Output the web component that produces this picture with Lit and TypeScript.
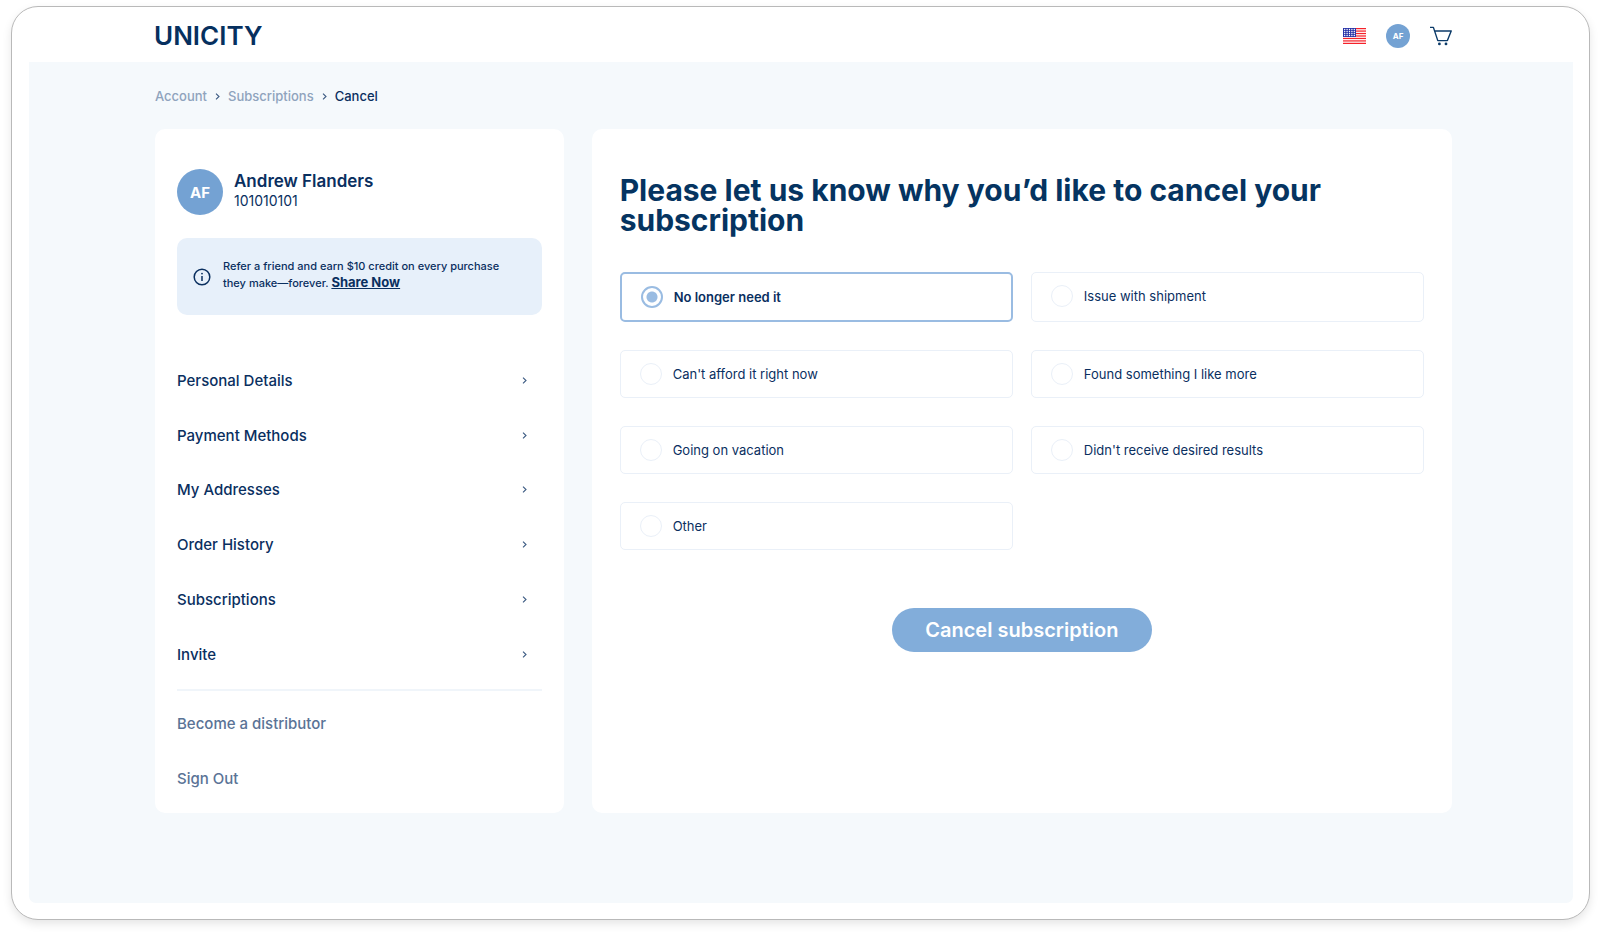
import { LitElement, html, css, svg } from "lit";
import { customElement, state } from "lit/decorators.js";
import { classMap } from "lit/directives/class-map.js";

const MENU = [
  "Personal Details",
  "Payment Methods",
  "My Addresses",
  "Order History",
  "Subscriptions",
  "Invite",
];

const REASONS = [
  "No longer need it",
  "Issue with shipment",
  "Can't afford it right now",
  "Found something I like more",
  "Going on vacation",
  "Didn't receive desired results",
  "Other",
];

const chevron = html`<svg class="chevron" viewBox="0 0 5 7" width="5" height="7" aria-hidden="true">
  <path d="M1 0.6 L4 3.5 L1 6.4" fill="none" stroke="currentColor" stroke-width="1.1" />
</svg>`;

const flag = html`<svg viewBox="0 0 23 16" width="23" height="16" role="img" aria-label="United States">
  <rect width="23" height="16" fill="#fff" />
  ${[0, 1, 2, 3, 4, 5, 6].map(
    (i) => svg`<rect y=${(i * 32) / 13} width="23" height=${16 / 13} fill="#f5222a" />`
  )}
  <rect width="13" height="9" fill="#2a35a8" />
  ${[0, 1, 2, 3].map((r) =>
    [0, 1, 2, 3, 4].map(
      (c) => svg`<circle cx=${1.7 + c * 2.4} cy=${1.5 + r * 2} r="0.7" fill="#fff" />`
    )
  )}
</svg>`;

const cart = html`<svg viewBox="0 0 22 20" width="22" height="20" aria-hidden="true">
  <path d="M0 1.4 H3.4 L7.8 14.6 H17.4 L21.2 5 H4.6" fill="none" stroke="#0b3a68" stroke-width="1.4" stroke-linejoin="round" />
  <circle cx="9.4" cy="17.9" r="1.4" fill="#0b3a68" />
  <circle cx="16" cy="17.9" r="1.4" fill="#0b3a68" />
</svg>`;

@customElement("app-root")
export class AppRoot extends LitElement {
  static styles = css`
    :host {
      box-sizing: border-box;
      min-height: 100vh;
      padding: 6px 10px 15px 11px;
      display: flex;
      background: #fff;
      color: #0a2f5f;
      font-family: Inter, "Liberation Sans", sans-serif;
      font-size: 13px;
    }
    * {
      box-sizing: border-box;
    }
    a {
      color: inherit;
      text-decoration: none;
    }
    .frame {
      flex: 1;
      display: flex;
      flex-direction: column;
      padding: 0 16px 16px 17px;
      border: 1px solid #b9b9b9;
      border-radius: 27px;
      background: #fff;
      box-shadow: 0 4px 10px rgba(0, 0, 0, 0.1);
    }
    .header {
      display: flex;
      align-items: center;
      justify-content: space-between;
      height: 55px;
      padding: 3px 121px 0 125px;
    }
    .logo {
      font-size: 26px;
      line-height: 30px;
      font-weight: 600;
      color: #06305f;
    }
    .tools {
      display: flex;
      align-items: center;
      gap: 20px;
    }
    .tools a {
      display: flex;
    }
    .avatar {
      display: flex;
      align-items: center;
      justify-content: center;
      flex: none;
      width: 46px;
      height: 46px;
      border-radius: 50%;
      background: #74a2d3;
      color: #fff;
      font-size: 15px;
      font-weight: 700;
    }
    .avatar.small {
      width: 24px;
      height: 24px;
      font-size: 8px;
    }
    .page {
      flex: 1;
      display: flex;
      flex-direction: column;
      padding: 24px 121px 90px 126px;
      border-radius: 0 0 7px 7px;
      background: #f5f9fc;
    }
    .crumbs {
      display: flex;
      align-items: center;
      gap: 8px;
      margin-bottom: 23px;
      line-height: 20px;
      font-weight: 500;
      color: #8fa3bd;
    }
    .crumbs .here {
      color: #0a2f5f;
    }
    .chevron {
      color: #3b5a82;
    }
    .columns {
      flex: 1;
      display: grid;
      grid-template-columns: 19fr 40fr;
      gap: 28px;
    }
    .card {
      display: flex;
      flex-direction: column;
      border-radius: 10px;
      background: #fff;
    }
    .side {
      padding: 40px 22px 7px;
    }
    .person {
      display: flex;
      gap: 11px;
    }
    .name {
      margin: 2px 0 0;
      font-size: 17px;
      line-height: 20px;
      font-weight: 600;
    }
    .number {
      margin: 0;
      font-size: 14px;
      line-height: 20px;
    }
    .refer {
      display: flex;
      align-items: center;
      gap: 12px;
      margin: 23px 0 38px;
      padding: 20px 26px 20px 16px;
      border-radius: 10px;
      background: #e7f0fa;
      font-size: 11px;
      line-height: 17px;
      font-weight: 500;
    }
    .refer svg {
      flex: none;
    }
    .refer p {
      margin: 0;
      padding-bottom: 3px;
    }
    .refer a {
      font-size: 13px;
      line-height: 15px;
      font-weight: 700;
      text-decoration: underline;
    }
    .menu {
      flex: 1;
      display: flex;
      flex-direction: column;
    }
    .item {
      flex: 1;
      display: flex;
      align-items: center;
      justify-content: space-between;
      min-height: 48px;
      padding-right: 15px;
      font-size: 15px;
      font-weight: 500;
    }
    .item.quiet {
      color: #5a7396;
    }
    .menu hr {
      width: 100%;
      margin: 7px 0 6px;
      border: 0;
      border-top: 2px solid #f0f5fa;
    }
    .main {
      padding: 46px 28px 28px;
    }
    h1 {
      margin: 0 0 37px;
      font-size: 30px;
      line-height: 30px;
      font-weight: 700;
      color: #053461;
    }
    .reasons {
      display: grid;
      grid-template-columns: 1fr 1fr;
      gap: 28px 18px;
      margin: 0;
      padding: 0;
      border: 0;
    }
    .reason {
      display: flex;
      align-items: flex-start;
      gap: 11px;
      padding: 12px 19px;
      border: 1px solid #eaf0f8;
      border-radius: 5px;
      font-size: 13px;
      line-height: 22px;
    }
    .reason.chosen {
      border: 2px solid #9abce2;
      font-weight: 600;
    }
    .reason input {
      appearance: none;
      flex: none;
      width: 22px;
      height: 22px;
      margin: 0;
      border: 1px solid #eaf0f8;
      border-radius: 50%;
    }
    .reason input:checked {
      border: 2px solid #9abce2;
      background: radial-gradient(circle, #9abce2 5px, #fff 6px);
    }
    .submit {
      align-self: center;
      min-width: 260px;
      height: 44px;
      margin-top: 58px;
      padding: 0 30px;
      border: 0;
      border-radius: 22px;
      background: #82adda;
      color: #fff;
      font: 600 20px/24px Inter, "Liberation Sans", sans-serif;
    }
  `;

  @state() private reason = REASONS[0];

  render() {
    return html`
      <div class="frame">
        <header class="header">
          <a class="logo" href="#">UNICITY</a>
          <div class="tools">
            <a href="#">${flag}</a>
            <a class="avatar small" href="#">AF</a>
            <a href="#" aria-label="Cart">${cart}</a>
          </div>
        </header>
        <div class="page">
          <nav class="crumbs" aria-label="Breadcrumb">
            <a href="#">Account</a>${chevron}<a href="#">Subscriptions</a>${chevron}<span class="here">Cancel</span>
          </nav>
          <div class="columns">
            <aside class="card side">
              <div class="person">
                <div class="avatar">AF</div>
                <div>
                  <p class="name">Andrew Flanders</p>
                  <p class="number">101010101</p>
                </div>
              </div>
              <div class="refer">
                <svg viewBox="0 0 18 18" width="18" height="18" aria-hidden="true">
                  <circle cx="9" cy="9" r="7.8" fill="none" stroke="#0a2f5f" stroke-width="1.5" />
                  <path d="M9 8 V13" stroke="#0a2f5f" stroke-width="1.5" />
                  <circle cx="9" cy="5.6" r="0.9" fill="#0a2f5f" />
                </svg>
                <p>
                  Refer a friend and earn $10 credit on every purchase they make—forever.
                  <a href="#">Share Now</a>
                </p>
              </div>
              <nav class="menu" aria-label="Account">
                ${MENU.map((label) => html`<a class="item" href="#"><span>${label}</span>${chevron}</a>`)}
                <hr />
                <a class="item quiet" href="#">Become a distributor</a>
                <a class="item quiet" href="#">Sign Out</a>
              </nav>
            </aside>
            <main class="card main">
              <h1>Please let us know why you’d like to cancel your subscription</h1>
              <fieldset class="reasons" aria-label="Reason">
                ${REASONS.map(
                  (label) => html`<label class=${classMap({ reason: true, chosen: label === this.reason })}>
                    <input
                      type="radio"
                      name="reason"
                      .checked=${label === this.reason}
                      @change=${() => (this.reason = label)}
                    />
                    <span>${label}</span>
                  </label>`
                )}
              </fieldset>
              <button class="submit" type="button">Cancel subscription</button>
            </main>
          </div>
        </div>
      </div>
    `;
  }
}
